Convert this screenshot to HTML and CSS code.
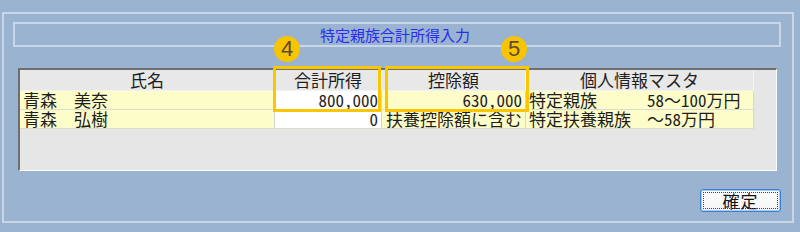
FILE: index.html
```html
<!DOCTYPE html>
<html lang="ja">
<head>
<meta charset="utf-8">
<link rel="stylesheet" href="styles.css">
</head>
<body>
<div class="screen">
  <div class="panel">
    <div class="title">特定親族合計所得入力</div>
    <div class="grid">
      <div class="row head">
        <div class="c c1">氏名</div>
        <div class="c c2">合計所得</div>
        <div class="c c3">控除額</div>
        <div class="c c4">個人情報マスタ</div>
      </div>
      <div class="row">
        <div class="c c1 y left">青森　美奈</div>
        <div class="c c2 w right num">800,000</div>
        <div class="c c3 y right num">630,000</div>
        <div class="c c4 y left"><span class="lbl">特定親族</span><span class="num">58</span>～<span class="num">100</span>万円</div>
      </div>
      <div class="row">
        <div class="c c1 y left">青森　弘樹</div>
        <div class="c c2 w right num">0</div>
        <div class="c c3 y right">扶養控除額に含む</div>
        <div class="c c4 y left"><span class="lbl">特定扶養親族</span>～<span class="num">58</span>万円</div>
      </div>
    </div>
    <div class="actions"><button class="btn">確定</button></div>
  </div>
  <div class="mark m4"></div>
  <div class="mark m5"></div>
  <div class="badge b4">4</div>
  <div class="badge b5">5</div>
</div>
</body>
</html>
```

FILE: styles.css
```css
html, body {
  margin: 0;
  padding: 0;
  background: #99b3d1;
}
.screen {
  position: relative;
  width: 800px;
  height: 232px;
  overflow: hidden;
  font-family: "Noto Sans CJK JP", "Noto Sans", sans-serif;
  color: #1e1e1e;
}
.panel {
  margin: 12px 0 0 2px;
  width: 792px;
  height: 211px;
  box-sizing: border-box;
  border: 2px solid #c8d6e7;
  padding: 8px 11px 0 9px;
}
.title {
  height: 25px;
  box-sizing: border-box;
  border: 2px solid #c8d6e7;
  color: #2a2cf0;
  font-size: 15px;
  line-height: 21px;
  text-align: center;
  padding-right: 4px;
}
.grid {
  margin: 21px 0 0 5px;
  width: 759px;
  height: 103px;
  box-sizing: border-box;
  border-top: 2px solid #6e6e6e;
  border-left: 2px solid #6e6e6e;
  border-right: 1px solid #ffffff;
  border-bottom: 1px solid #ffffff;
  background: #e6e6e6;
}
.row {
  display: flex;
  height: 19px;
}
.row.head {
  height: 21px;
}
.c {
  box-sizing: border-box;
  border-right: 1px solid #d6d6d6;
  border-bottom: 1px solid #dcdcd0;
  font-size: 17px;
  line-height: 18px;
  white-space: nowrap;
  overflow: visible;
}
.head .c {
  background: #e8e8e8;
  text-align: center;
  line-height: 20px;
  border-right: 1px solid #f4f4f4;
  border-bottom: 1px solid #f2f2f2;
}
.c1 { width: 255px; }
.c2 { width: 107px; }
.c3 { width: 144px; }
.c4 { width: 228px; }
.y { background: #fdfdc9; }
.w { background: #ffffff; }
.left { padding-left: 3px; }
.right { text-align: right; padding-right: 3px; }
.num {
  font-feature-settings: "hwid";
}
.lbl {
  display: inline-block;
  width: 118px;
}
.actions {
  display: flex;
  justify-content: flex-end;
  margin-top: 18px;
}
.btn {
  width: 81px;
  height: 23px;
  box-sizing: border-box;
  border: 1px solid #3a7fd6;
  border-radius: 3px;
  box-shadow: inset 0 0 0 1px #a9cbf2;
  background: linear-gradient(#ffffff, #f3f3f3);
  outline: 1px dotted #444;
  outline-offset: -4px;
  font-family: "Noto Sans CJK JP", sans-serif;
  font-size: 17px;
  line-height: 19px;
  letter-spacing: 1px;
  padding: 0 0 0 0;
  color: #111;
}
.mark {
  position: absolute;
  box-sizing: border-box;
  border: 3px solid #fac600;
  top: 66px;
  height: 46px;
}
.m4 { left: 273px; width: 108px; }
.m5 { left: 385px; width: 144px; }
.badge {
  position: absolute;
  width: 26px;
  height: 26px;
  border-radius: 50%;
  background: #f8c400;
  color: #5e4a36;
  font-family: "Liberation Sans", "DejaVu Sans", sans-serif;
  font-size: 22px;
  line-height: 26px;
  text-align: center;
}
.b4 { left: 274px; top: 36px; }
.b5 { left: 501px; top: 36px; }
```
